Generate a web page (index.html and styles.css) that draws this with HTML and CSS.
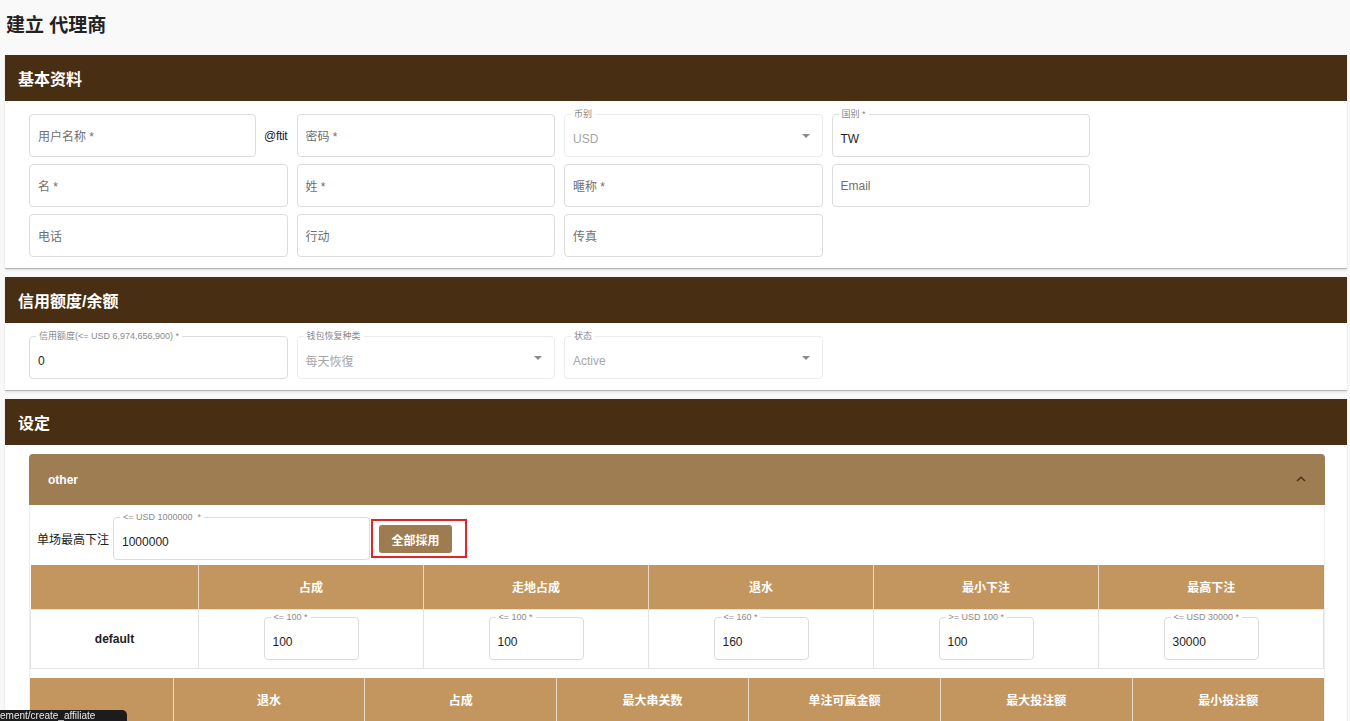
FILE: index.html
```html
<!DOCTYPE html>
<html lang="zh">
<head>
<meta charset="utf-8">
<title>建立 代理商</title>
<link rel="stylesheet" href="styles.css">
</head>
<body>
<div class="page">
  <h1 class="page-title">建立 代理商</h1>

  <section class="panel">
    <div class="panel-head">基本资料</div>
    <div class="panel-body">
      <div class="form-grid">
        <div class="cell-user">
          <div class="input user-input"><span class="ph">用户名称 *</span></div>
          <span class="suffix">@ftit</span>
        </div>
        <div class="input"><span class="ph">密码 *</span></div>
        <div class="input labeled disabled"><span class="legend">币别</span><span class="val muted">USD</span><span class="caret"></span></div>
        <div class="input labeled"><span class="legend">国别 *</span><span class="val">TW</span></div>

        <div class="input"><span class="ph">名 *</span></div>
        <div class="input"><span class="ph">姓 *</span></div>
        <div class="input"><span class="ph">暱称 *</span></div>
        <div class="input"><span class="ph">Email</span></div>

        <div class="input"><span class="ph">电话</span></div>
        <div class="input"><span class="ph">行动</span></div>
        <div class="input"><span class="ph">传真</span></div>
      </div>
    </div>
  </section>

  <section class="panel">
    <div class="panel-head">信用额度/余额</div>
    <div class="panel-body">
      <div class="form-grid">
        <div class="input labeled"><span class="legend">信用额度(&lt;= USD 6,974,656,900) *</span><span class="val">0</span></div>
        <div class="input labeled disabled"><span class="legend">钱包恢复种类</span><span class="val muted">每天恢復</span><span class="caret"></span></div>
        <div class="input labeled disabled"><span class="legend">状态</span><span class="val muted">Active</span><span class="caret"></span></div>
      </div>
    </div>
  </section>

  <section class="panel">
    <div class="panel-head">设定</div>
    <div class="panel-body settings-body">
      <div class="accordion">
        <div class="acc-head">
          <span class="acc-title">other</span>
          <svg class="chev" width="10" height="6" viewBox="0 0 10 6"><path d="M1 5 L5 1.2 L9 5" fill="none" stroke="#4a3218" stroke-width="1.5"/></svg>
        </div>
        <div class="acc-body">
          <div class="max-row">
            <span class="max-label">单场最高下注</span>
            <div class="input labeled max-input"><span class="legend">&lt;= USD 1000000&nbsp;&nbsp;*</span><span class="val">1000000</span></div>
            <div class="highlight"><button class="btn">全部採用</button></div>
          </div>

          <table class="grid-table t1">
            <colgroup><col class="c-first1"><col><col><col><col><col></colgroup>
            <thead>
              <tr><th></th><th>占成</th><th>走地占成</th><th>退水</th><th>最小下注</th><th>最高下注</th></tr>
            </thead>
            <tbody>
              <tr>
                <td class="rowname">default</td>
                <td><div class="input labeled small"><span class="legend">&lt;= 100 *</span><span class="val">100</span></div></td>
                <td><div class="input labeled small"><span class="legend">&lt;= 100 *</span><span class="val">100</span></div></td>
                <td><div class="input labeled small"><span class="legend">&lt;= 160 *</span><span class="val">160</span></div></td>
                <td><div class="input labeled small"><span class="legend">&gt;= USD 100 *</span><span class="val">100</span></div></td>
                <td><div class="input labeled small"><span class="legend">&lt;= USD 30000 *</span><span class="val">30000</span></div></td>
              </tr>
            </tbody>
          </table>

          <table class="grid-table t2">
            <colgroup><col class="c-first2"><col><col><col><col><col><col></colgroup>
            <thead>
              <tr><th></th><th>退水</th><th>占成</th><th>最大串关数</th><th>单注可赢金额</th><th>最大投注额</th><th>最小投注额</th></tr>
            </thead>
          </table>
        </div>
      </div>
    </div>
  </section>
</div>
<div class="status-url">ement/create_affiliate</div>
</body>
</html>
```

FILE: styles.css
```css
* { box-sizing: border-box; }

html, body {
  margin: 0;
  padding: 0;
  background: #f9f9f9;
  font-family: "Liberation Sans", "Noto Sans CJK SC", sans-serif;
  color: #222;
  overflow: hidden;
}

.page {
  padding: 0 3px 0 5px;
}

.page-title {
  margin: 0;
  height: 55px;
  padding-top: 13px;
  padding-left: 1px;
  font-size: 19px;
  line-height: 25px;
  font-weight: 700;
  color: #222;
}

.panel {
  background: #fff;
  margin-bottom: 8px;
  border-bottom: 1px solid #b8b8b8;
  box-shadow: 0 1px 2px rgba(0, 0, 0, 0.12);
}

.panel-head {
  background: #482e13;
  color: #fff;
  height: 46px;
  line-height: 50px;
  overflow: hidden;
  padding-left: 13px;
  font-size: 16px;
  font-weight: 700;
}

.panel-body {
  padding: 13px 24px 11px 24px;
}

.form-grid {
  display: grid;
  grid-template-columns: repeat(4, 258.5px);
  column-gap: 9px;
  row-gap: 7px;
}

.cell-user {
  display: flex;
  align-items: center;
  gap: 8px;
}

.user-input {
  flex: none;
  width: 227px;
}

.suffix {
  font-size: 12px;
  color: #222;
  letter-spacing: -0.3px;
}

.input {
  position: relative;
  height: 43px;
  border: 1px solid #dcdcdc;
  border-radius: 4px;
  background: #fff;
  display: flex;
  align-items: center;
  padding: 0 8px;
}

.input.labeled {
  padding-top: 6px;
}

.input.disabled {
  border-color: #ececec;
}

.ph {
  font-size: 12px;
  color: #6f6f6f;
}

.val {
  font-size: 12px;
  color: #1e1e1e;
}

.val.muted {
  color: #a6a6a6;
}

.legend {
  position: absolute;
  top: -7px;
  left: 6px;
  padding: 0 3px;
  background: #fff;
  font-size: 9px;
  line-height: 12px;
  color: #8a8a8a;
  white-space: nowrap;
}

.caret {
  position: absolute;
  right: 12px;
  top: 19px;
  width: 0;
  height: 0;
  border-left: 4px solid transparent;
  border-right: 4px solid transparent;
  border-top: 4px solid #8a8a8a;
}

/* settings */
.settings-body {
  padding: 9px 22px 12px 24px;
}

.accordion {
  border-radius: 4px;
}

.acc-head {
  background: #9e7d53;
  height: 51px;
  border-radius: 4px 4px 0 0;
  display: flex;
  align-items: center;
  justify-content: space-between;
  padding: 0 19px 0 19px;
}

.acc-title {
  color: #fff;
  font-size: 12px;
  font-weight: 700;
}

.chev {
  margin-top: -2px;
}

.acc-body {
  border-left: 1px solid #eee;
  border-right: 1px solid #eee;
  background: #fff;
}

.max-row {
  display: flex;
  align-items: center;
  padding: 12px 0 5px 7px;
}

.max-label {
  font-size: 12px;
  color: #222;
  margin-right: 4px;
}

.max-input {
  width: 257px;
}

.highlight {
  margin-left: 1px;
  border: 2px solid #e2242b;
  padding: 4px 13px 3px 6px;
  display: flex;
  align-items: center;
}

.btn {
  width: 73px;
  height: 28px;
  border: none;
  border-radius: 3px;
  background: #9d7c51;
  color: #fff;
  font-family: "Liberation Sans", "Noto Sans CJK SC", sans-serif;
  font-size: 12px;
  font-weight: 700;
  padding: 0;
}

.grid-table {
  width: 100%;
  table-layout: fixed;
  border-collapse: collapse;
}

.grid-table th {
  background: #c3965f;
  color: #fff;
  font-size: 12px;
  font-weight: 700;
  height: 44px;
  text-align: center;
  border-left: 1px solid #ead9c3;
  padding: 0;
}

.grid-table th:first-child {
  border-left: none;
}

.grid-table td {
  height: 59px;
  border: 1px solid #e2e2e2;
  text-align: center;
  padding: 0;
}

.grid-table td .input {
  width: 95px;
  margin: 0 auto;
  text-align: left;
}

.rowname {
  font-size: 12px;
  font-weight: 700;
  color: #222;
}

.c-first1 { width: 168px; }
.c-first2 { width: 143px; }

.t2 {
  margin-top: 9px;
}

.status-url {
  position: fixed;
  left: 0;
  bottom: 0;
  height: 11px;
  width: 127px;
  padding: 0 4px 0 0;
  background: #1c1c1c;
  color: #e8e8e8;
  font-family: "Liberation Sans", sans-serif;
  font-size: 10px;
  line-height: 12px;
  white-space: nowrap;
  overflow: hidden;
  border-top-right-radius: 5px;
}
```
